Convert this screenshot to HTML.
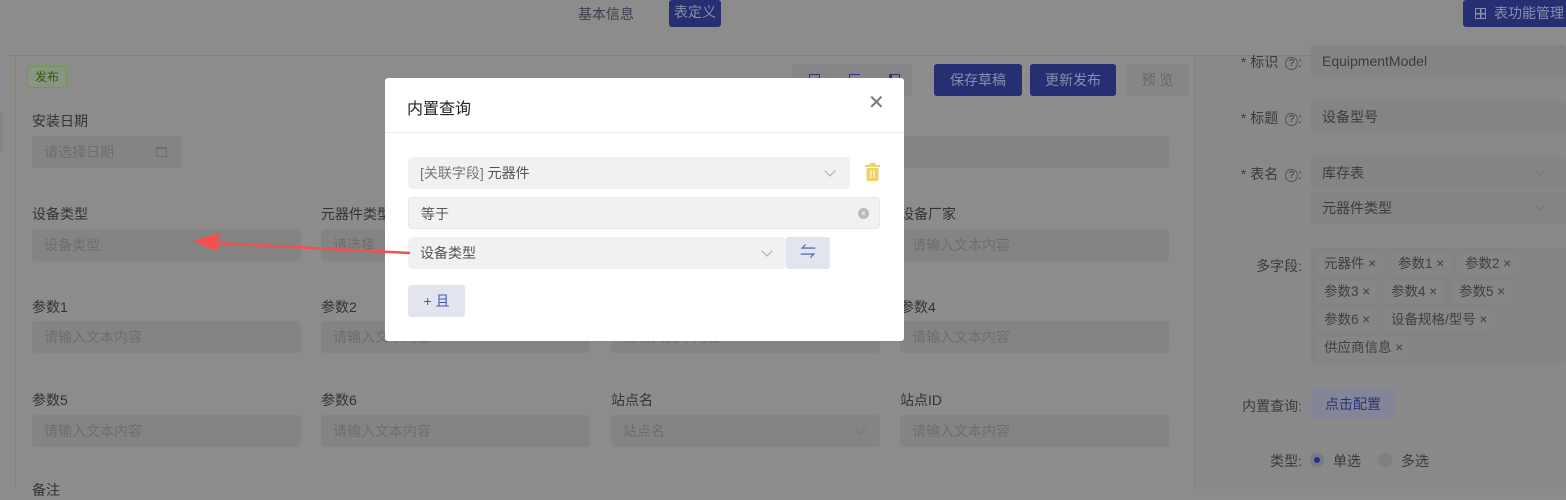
<!DOCTYPE html>
<html><head><meta charset="utf-8"><style>
*{box-sizing:border-box;margin:0;padding:0}
body{width:1566px;height:489px;overflow:hidden;background:#8c8c8c;font-family:"Liberation Sans","Noto Sans CJK SC",sans-serif;position:relative;font-size:14px;color:#3a3a3a}
.a{position:absolute}
.lbl{position:absolute;font-size:14px;color:#333}
.inp{position:absolute;height:32px;background:#848484;border-radius:4px;color:#6d6d6d;font-size:14px;line-height:32px;padding-left:12px}
.chev{position:absolute;width:8px;height:8px;border-right:1px solid #777;border-bottom:1px solid #777;transform:rotate(45deg)}
.btn{position:absolute;background:#252f72;color:#8a8fae;border-radius:3px;text-align:center;font-size:14px}
.tag{position:absolute;height:22px;background:#868686;border-radius:3px;font-size:13.5px;line-height:22px;padding:0 7px 0 8px;color:#3f3f3f}
.rl{position:absolute;font-size:14px;color:#3a3a3a;text-align:right;width:106px}
.q{display:inline-block;width:13px;height:13px;border:1px solid #555;border-radius:50%;font-size:10px;line-height:11px;text-align:center;vertical-align:1px;margin-left:3px}
.m{background:#fff}
.mi{position:absolute;height:32px;background:#f0f1f3;border-radius:4px;font-size:14px;line-height:32px;padding-left:12px;color:#555}
.ti{position:absolute;top:10px;width:11px;height:12px;border:1.5px solid #2a3480}
</style></head><body>
<!-- top -->
<div class="a" style="left:578px;top:4px;font-size:14px;color:#3c3c4c">基本信息</div>
<div class="btn" style="left:669px;top:0;width:52px;height:27px;line-height:24px">表定义</div>
<div class="btn" style="left:1463px;top:0;width:110px;height:27px;line-height:26px;text-align:left;padding-left:12px"><span style="display:inline-block;width:11px;height:11px;border:1.5px solid #8a8fae;margin-right:8px;vertical-align:-1px;background:linear-gradient(#8a8fae,#8a8fae) 4px 0/1.5px 100% no-repeat,linear-gradient(#8a8fae,#8a8fae) 0 4px/100% 1.5px no-repeat"></span>表功能管理</div>
<div class="a" style="left:10px;top:55px;width:1556px;height:1px;background:#7e7e7e"></div>
<div class="a" style="left:15px;top:55px;width:1px;height:434px;background:#828282"></div>
<div class="a" style="left:1194px;top:56px;width:1px;height:433px;background:#828282"></div>
<div class="a" style="left:1195px;top:56px;width:371px;height:433px;background:#898989"></div>
<div class="a" style="left:-18px;top:65px;width:22px;height:30px;border-radius:50%;background:#8a8a98"></div>
<div class="a" style="left:0;top:112px;width:3px;height:40px;border:1px solid #808080"></div>
<!-- badge -->
<div class="a" style="left:27px;top:66px;width:40px;height:22px;border:1px solid #6e9a48;border-radius:3px;background:#8a9482;color:#2d5a10;font-size:12px;line-height:20px;text-align:center">发布</div>
<!-- toolbar -->
<div class="a" style="left:792px;top:64px;width:120px;height:32px;background:#868688;border-radius:3px">
<div class="ti" style="left:17px"></div><div class="ti" style="left:57px;border-right:none"></div><div class="ti" style="left:97px;border-left-width:3px"></div></div>
<div class="btn" style="left:934px;top:64px;width:88px;height:32px;line-height:32px">保存草稿</div>
<div class="btn" style="left:1030px;top:64px;width:86px;height:32px;line-height:32px">更新发布</div>
<div class="a" style="left:1126px;top:64px;width:63px;height:32px;background:#868688;border-radius:3px;text-align:center;line-height:32px;color:#666">预 览</div>
<!-- fields -->
<div class="lbl" style="left:32px;top:111px">安装日期</div>
<div class="inp" style="left:32px;top:136px;width:149px">请选择日期<span class="a" style="left:124px;top:11px;width:11px;height:10px;border:1px solid #6d6d6d;border-top-width:2px"></span></div>
<div class="a" style="left:880px;top:136px;width:289px;height:32px;background:#848484;border-radius:4px"></div>

<div class="lbl" style="left:32px;top:204px">设备类型</div>
<div class="inp" style="left:32px;top:229px;width:269px">设备类型</div>
<div class="lbl" style="left:321px;top:204px">元器件类型</div>
<div class="inp" style="left:321px;top:229px;width:269px">请选择</div>
<div class="lbl" style="left:900px;top:204px">设备厂家</div>
<div class="inp" style="left:900px;top:229px;width:269px">请输入文本内容</div>

<div class="lbl" style="left:32px;top:297px">参数1</div>
<div class="inp" style="left:32px;top:321px;width:269px">请输入文本内容</div>
<div class="lbl" style="left:321px;top:297px">参数2</div>
<div class="inp" style="left:321px;top:321px;width:269px">请输入文本内容</div>
<div class="inp" style="left:611px;top:321px;width:269px">请输入文本内容</div>
<div class="lbl" style="left:900px;top:297px">参数4</div>
<div class="inp" style="left:900px;top:321px;width:269px">请输入文本内容</div>

<div class="lbl" style="left:32px;top:390px">参数5</div>
<div class="inp" style="left:32px;top:415px;width:269px">请输入文本内容</div>
<div class="lbl" style="left:321px;top:390px">参数6</div>
<div class="inp" style="left:321px;top:415px;width:269px">请输入文本内容</div>
<div class="lbl" style="left:611px;top:390px">站点名</div>
<div class="inp" style="left:611px;top:415px;width:269px">站点名<span class="chev" style="left:246px;top:10px"></span></div>
<div class="lbl" style="left:900px;top:390px">站点ID</div>
<div class="inp" style="left:900px;top:415px;width:269px">请输入文本内容</div>
<div class="lbl" style="left:32px;top:480px">备注</div>

<!-- right panel -->
<div class="rl" style="left:1196px;top:52px"><span style="color:#8a2020">* </span>标识 <span class="q">?</span>:</div>
<div class="inp" style="left:1310px;top:45px;width:256px;color:#3c3c3c">EquipmentModel</div>
<div class="rl" style="left:1196px;top:108px"><span style="color:#8a2020">* </span>标题 <span class="q">?</span>:</div>
<div class="inp" style="left:1310px;top:101px;width:256px;color:#3c3c3c">设备型号</div>
<div class="rl" style="left:1196px;top:164px"><span style="color:#8a2020">* </span>表名 <span class="q">?</span>:</div>
<div class="inp" style="left:1310px;top:157px;width:256px;color:#3c3c3c">库存表<span class="chev" style="left:226px;top:9px"></span></div>
<div class="inp" style="left:1310px;top:192px;width:256px;color:#3c3c3c">元器件类型<span class="chev" style="left:226px;top:9px"></span></div>
<div class="rl" style="left:1196px;top:256px">多字段:</div>
<div class="a" style="left:1310px;top:248px;width:256px;height:115px;background:#848484;border-radius:4px"></div>
<div class="tag" style="left:1316px;top:253px">元器件 ×</div>
<div class="tag" style="left:1390px;top:253px">参数1 ×</div>
<div class="tag" style="left:1457px;top:253px">参数2 ×</div>
<div class="tag" style="left:1316px;top:281px">参数3 ×</div>
<div class="tag" style="left:1383px;top:281px">参数4 ×</div>
<div class="tag" style="left:1451px;top:281px">参数5 ×</div>
<div class="tag" style="left:1316px;top:309px">参数6 ×</div>
<div class="tag" style="left:1383px;top:309px">设备规格/型号 ×</div>
<div class="tag" style="left:1316px;top:337px">供应商信息 ×</div>
<div class="rl" style="left:1196px;top:396px">内置查询:</div>
<div class="a" style="left:1310px;top:388px;width:86px;height:32px;background:#838696;border-radius:4px;color:#2a3480;line-height:32px;text-align:center">点击配置</div>
<div class="rl" style="left:1196px;top:451px">类型:</div>
<div class="a" style="left:1310px;top:453px;width:14px;height:14px;border-radius:50%;background:#7a7a86"><div class="a" style="left:4px;top:4px;width:6px;height:6px;border-radius:50%;background:#253080"></div></div>
<div class="a" style="left:1333px;top:451px">单选</div>
<div class="a" style="left:1378px;top:453px;width:14px;height:14px;border-radius:50%;background:#7f7f7f"></div>
<div class="a" style="left:1401px;top:451px">多选</div>

<!-- modal -->
<div class="a m" style="left:385px;top:78px;width:519px;height:263px;border-radius:3px"></div>
<div class="a" style="left:407px;top:95px;font-size:16px;color:#222">内置查询</div>
<div class="a" style="left:868px;top:90px;font-size:20px;color:#777;font-weight:300">✕</div>
<div class="a" style="left:385px;top:132px;width:519px;height:1px;background:#ececec"></div>
<div class="mi" style="left:408px;top:157px;width:442px;color:#777">[关联字段] <span style="color:#555">元器件</span><span class="chev" style="left:418px;top:10px;border-color:#aaa"></span></div>
<svg class="a" style="left:865px;top:163px" width="15" height="18" viewBox="0 0 15 18"><rect x="4.5" y="0" width="6" height="2" fill="#f0d067"/><rect x="0" y="2" width="15" height="2" fill="#f0d067"/><rect x="1.5" y="5" width="12" height="13" fill="#f0d067"/><rect x="5.5" y="7" width="1" height="8" fill="#fff"/><rect x="8.5" y="7" width="1" height="8" fill="#fff"/></svg>
<div class="mi" style="left:408px;top:197px;width:472px;border:1px solid #e6e6e8">等于<span class="a" style="left:449px;top:10px;width:11px;height:11px;border-radius:50%;background:#bbb;color:#fff;font-size:8px;line-height:11px;text-align:center">×</span></div>
<div class="mi" style="left:408px;top:237px;width:378px">设备类型<span class="chev" style="left:355px;top:10px;border-color:#aaa"></span></div>
<div class="a" style="left:786px;top:237px;width:44px;height:32px;background:#e2e4ee;border-radius:3px;color:#4a55b0;text-align:center;line-height:32px;font-size:16px">⇋</div>
<div class="a" style="left:408px;top:285px;width:57px;height:32px;background:#e2e4ee;border-radius:3px;color:#4a55b0;text-align:center;line-height:32px">+ 且</div>

<!-- arrow -->
<svg class="a" style="left:0;top:0" width="1566" height="489"><line x1="410" y1="253" x2="215" y2="243" stroke="#f35050" stroke-width="2.5"/><polygon points="193,241 219,233 218,252" fill="#f35050"/></svg>
</body></html>
